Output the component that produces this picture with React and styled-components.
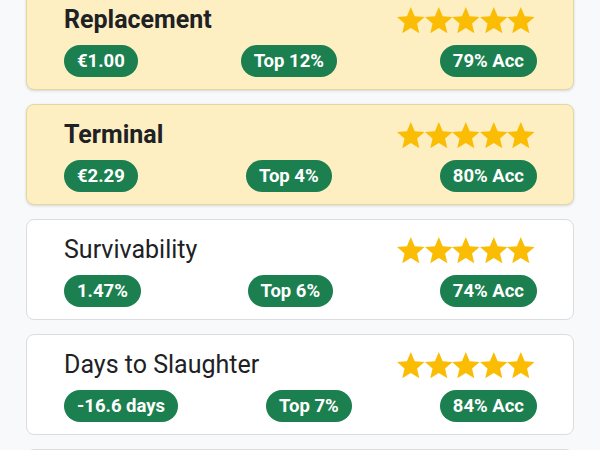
import React from "react";
import styled, { createGlobalStyle } from "styled-components";

const Global = createGlobalStyle`
  html, body { margin: 0; padding: 0; background: #f8f9fa; }
  body { font-family: Roboto, "Liberation Sans", sans-serif; overflow: hidden; }
`;

const List = styled.div`
  display: flex;
  flex-direction: column;
  gap: 14px;
  padding: 0 26px;
  margin-top: -11px;
`;

const Card = styled.div`
  box-sizing: border-box;
  height: 101px;
  display: flex;
  flex-direction: column;
  gap: 12px;
  padding: 17px 36px 13px 37px;
  border-radius: 8px;
  background: ${(p) => (p.$highlight ? "#feefc2" : "#ffffff")};
  border: 1px solid ${(p) => (p.$highlight ? "#e6d59c" : "#dadce0")};
  box-shadow: ${(p) => (p.$highlight ? "0 1px 3px rgba(0,0,0,0.14)" : "none")};
`;

const TopRow = styled.div`
  display: flex;
  align-items: center;
  justify-content: space-between;
  height: 26px;
`;

const Title = styled.div`
  font-size: 25px;
  line-height: 26px;
  color: #202124;
  font-weight: ${(p) => (p.$bold ? 700 : 400)};
`;

const Stars = styled.div`
  display: flex;
  margin-right: 2px;
`;

const ChipRow = styled.div`
  display: flex;
  justify-content: space-between;
  align-items: center;
`;

const Chip = styled.span`
  display: inline-block;
  background: #1c7f4f;
  color: #ffffff;
  font-weight: 700;
  font-size: 18.5px;
  line-height: 22px;
  padding: 5px 13px;
  border-radius: 16px;
`;

const Star = () => (
  <svg width="27.6" height="26.6" viewBox="2 2 20 19.27">
    <path
      fill="#fbbc04"
      d="M12 17.27L18.18 21l-1.64-7.03L22 9.24l-7.19-.61L12 2 9.19 8.63 2 9.24l5.46 4.73L5.82 21z"
    />
  </svg>
);

const data = [
  { title: "Replacement", hl: true, chips: ["€1.00", "Top 12%", "79% Acc"] },
  { title: "Terminal", hl: true, chips: ["€2.29", "Top 4%", "80% Acc"] },
  { title: "Survivability", hl: false, chips: ["1.47%", "Top 6%", "74% Acc"] },
  { title: "Days to Slaughter", hl: false, chips: ["-16.6 days", "Top 7%", "84% Acc"] },
];

export default function App() {
  return (
    <>
      <Global />
      <List>
        {data.map((d) => (
          <Card key={d.title} $highlight={d.hl}>
            <TopRow>
              <Title $bold={d.hl}>{d.title}</Title>
              <Stars>
                {[0, 1, 2, 3, 4].map((i) => (
                  <Star key={i} />
                ))}
              </Stars>
            </TopRow>
            <ChipRow>
              {d.chips.map((c) => (
                <Chip key={c}>{c}</Chip>
              ))}
            </ChipRow>
          </Card>
        ))}
        <Card aria-hidden="true" />
      </List>
    </>
  );
}
